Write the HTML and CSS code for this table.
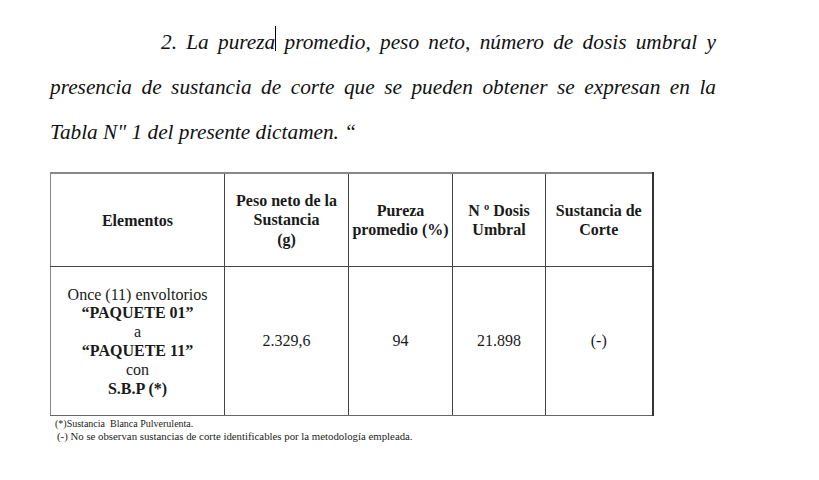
FILE: index.html
```html
<!DOCTYPE html>
<html lang="es">
<head>
<meta charset="utf-8">
<link rel="stylesheet" href="styles.css">
</head>
<body>
<div class="page">
  <div class="text-wrap">
    <p class="para">2. La pureza promedio, peso neto, número de dosis umbral y presencia de sustancia de corte que se pueden obtener se expresan en la Tabla N" 1 del presente dictamen. “</p>
    <div class="caret"></div>
  </div>
  <table class="tbl">
    <colgroup>
      <col class="c1"><col class="c2"><col class="c3"><col class="c4"><col class="c5">
    </colgroup>
    <tr class="head">
      <th>Elementos</th>
      <th>Peso neto de la<br>Sustancia<br>(g)</th>
      <th>Pureza<br>promedio (%)</th>
      <th>N º Dosis<br>Umbral</th>
      <th>Sustancia de<br>Corte</th>
    </tr>
    <tr class="body">
      <td>Once (11) envoltorios<br><b>“PAQUETE 01”</b><br>a<br><b>“PAQUETE 11”</b><br>con<br><b>S.B.P (*)</b></td>
      <td>2.329,6</td>
      <td>94</td>
      <td>21.898</td>
      <td>(-)</td>
    </tr>
  </table>
  <div class="notes">
    <div class="n1">(*)Sustancia&nbsp; Blanca Pulverulenta.</div>
    <div class="n2">(-) No se observan sustancias de corte identificables por la metodología empleada.</div>
  </div>
</div>
</body>
</html>
```
FILE: styles.css
```css
html, body {
  margin: 0;
  padding: 0;
  background: #fff;
}
.page {
  padding: 20px 0 0 50px;
  color: #111;
  font-family: "Liberation Serif", "Times New Roman", serif;
}
.text-wrap {
  position: relative;
  width: 666px;
}
.para {
  margin: 0;
  font-style: italic;
  font-size: 21.3px;
  line-height: 45px;
  text-align: justify;
  text-indent: 111px;
}
.caret {
  position: absolute;
  left: 225px;
  top: 6px;
  width: 1px;
  height: 25px;
  background: #000;
}
.tbl {
  margin-top: 17px;
  border-collapse: collapse;
  table-layout: fixed;
  width: 602px;
  color: #1a1a1a;
}
.c1 { width: 174px; }
.c2 { width: 124px; }
.c3 { width: 104px; }
.c4 { width: 93px; }
.c5 { width: 107px; }
.tbl th, .tbl td {
  border: 1px solid #444;
  text-align: center;
  vertical-align: middle;
  padding: 0;
}
.tbl tr.head th {
  border-top: 2px solid #888;
  height: 90px;
  font-size: 16px;
  line-height: 19.5px;
  font-weight: bold;
}
.tbl tr.head th:first-child { padding-top: 2px; }
.tbl tr.body td {
  height: 146px;
  font-size: 16px;
  line-height: 18.8px;
}
.tbl tr.body td:first-child { padding-top: 2px; }
.tbl th:first-child, .tbl td:first-child { border-left: 1px solid #888; }
.tbl th:last-child, .tbl td:last-child { border-right: 2px solid #333; }
.tbl tr.body td { border-bottom: 1px solid #666; }
.notes {
  font-size: 10px;
  line-height: 13px;
  color: #222;
  padding-top: 1px;
}
.n1 { padding-left: 5px; }
.n2 { padding-left: 7px; font-size: 10.8px; }
```
